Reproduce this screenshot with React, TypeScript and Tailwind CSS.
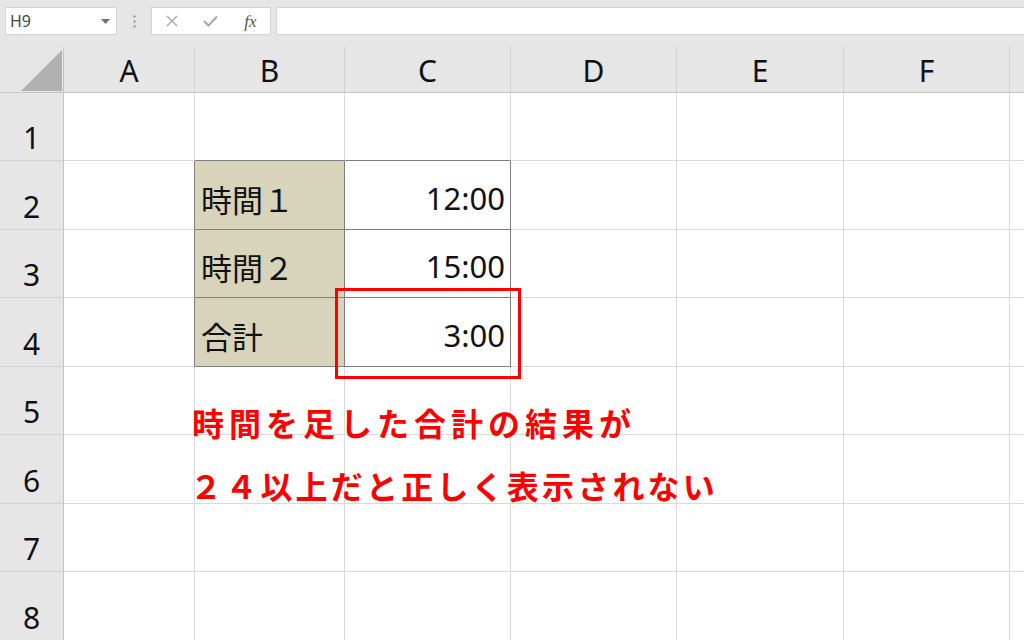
import React from "react";

const COLS = ["A", "B", "C", "D", "E", "F"];
const COLW = ["w-[131px]", "w-[150px]", "w-[166px]", "w-[166px]", "w-[167px]", "w-[166px]"];
const ROWH = ["h-[68px]", "h-[69px]", "h-[68px]", "h-[69px]", "h-[68px]", "h-[69px]", "h-[68px]", "h-[69px]"];

const jp = "font-['Noto_Sans_CJK_JP','Noto_Sans',sans-serif]";
const num = "font-['Noto_Sans','Noto_Sans_CJK_JP',sans-serif]";

function cellClass(r: number, c: number): string {
  // r: 1..8, c: 0..5 (A..F)
  const inTable = r >= 2 && r <= 4 && (c === 1 || c === 2);
  const right =
    inTable || (c === 0 && r >= 2 && r <= 4) ? "border-r-[#7f7f7f]" : "border-r-[#dadada]";
  const bottom =
    inTable || (r === 1 && (c === 1 || c === 2)) ? "border-b-[#7f7f7f]" : "border-b-[#dadada]";
  const bg = inTable && c === 1 ? "bg-[#d8d4bc]" : "bg-white";
  return `shrink-0 border-r border-b ${right} ${bottom} ${bg} flex items-end`;
}

const data: Record<string, { text: string; align: "left" | "right"; jp?: boolean }> = {
  "2-1": { text: "時間１", align: "left", jp: true },
  "3-1": { text: "時間２", align: "left", jp: true },
  "4-1": { text: "合計", align: "left", jp: true },
  "2-2": { text: "12:00", align: "right" },
  "3-2": { text: "15:00", align: "right" },
  "4-2": { text: "3:00", align: "right" },
};

export default function App() {
  return (
    <div className="relative w-[1024px] h-[640px] overflow-hidden bg-[#e6e6e6] select-none">
      {/* Formula bar */}
      <div className="flex items-center h-[47px] pt-[7px] pb-[12px] pl-[5px]">
        <div className="flex items-center justify-between w-[112px] h-[28px] bg-white border border-[#d4d4d4] pl-[4px] pr-[6px]">
          <span className="text-[16px] text-[#444] font-['Noto_Sans',sans-serif] leading-none">H9</span>
          <svg width="9" height="5" viewBox="0 0 9 5">
            <path d="M0 0 L9 0 L4.5 5 Z" fill="#707070" />
          </svg>
        </div>
        <div className="w-[34px] flex justify-center">
          <svg width="3" height="13" viewBox="0 0 3 13">
            <circle cx="1.5" cy="1.5" r="1.2" fill="#9a9a9a" />
            <circle cx="1.5" cy="6.5" r="1.2" fill="#9a9a9a" />
            <circle cx="1.5" cy="11.5" r="1.2" fill="#9a9a9a" />
          </svg>
        </div>
        <div className="flex items-center w-[120px] h-[28px] bg-white border border-[#d4d4d4]">
          <div className="w-[40px] flex justify-center">
            <svg width="12" height="12" viewBox="0 0 12 12">
              <path d="M1 1 L11 11 M11 1 L1 11" stroke="#a8a8a8" strokeWidth="1.4" />
            </svg>
          </div>
          <div className="w-[40px] flex justify-center">
            <svg width="15" height="12" viewBox="0 0 15 12">
              <path d="M1 6 L5.5 10.5 L14 1.5" stroke="#a8a8a8" strokeWidth="2" fill="none" />
            </svg>
          </div>
          <div className="w-[40px] flex justify-center">
            <span className="font-['Liberation_Serif',serif] italic text-[17px] text-[#555] leading-none">fx</span>
          </div>
        </div>
        <div className="ml-[5px] flex-1 h-[28px] bg-white border border-[#d4d4d4] border-r-0" />
      </div>

      {/* Column headers */}
      <div className="flex h-[46px] border-b border-[#c4c4c4]">
        <div className="relative w-[64px] shrink-0 border-r border-[#c4c4c4]">
          <svg className="absolute right-[1px] bottom-[1px]" width="41" height="41" viewBox="0 0 41 41">
            <path d="M41 0 L41 41 L0 41 Z" fill="#b1b1b1" />
          </svg>
        </div>
        {COLS.map((c, i) => (
          <div
            key={c}
            className={`${COLW[i]} shrink-0 border-r border-[#d2d2d2] flex items-center justify-center`}
          >
            <span className={`${num} text-[30px] text-[#111] leading-none pt-[2px]`}>{c}</span>
          </div>
        ))}
        <div className="flex-1" />
      </div>

      {/* Rows */}
      {ROWH.map((h, ri) => {
        const r = ri + 1;
        return (
          <div key={r} className={`flex ${h}`}>
            <div className="w-[64px] shrink-0 border-r border-b border-r-[#c4c4c4] border-b-[#d2d2d2] bg-[#e6e6e6] flex items-end justify-center pb-[7px]">
              <span className={`${num} text-[30px] text-[#111] leading-none`}>{r}</span>
            </div>
            {COLS.map((_, c) => {
              const d = data[`${r}-${c}`];
              return (
                <div key={c} className={`${COLW[c]} ${cellClass(r, c)}`}>
                  {d && (
                    <div
                      className={`w-full pb-[15px] ${
                        d.align === "right" ? "text-right pr-[5px]" : "text-left pl-[6px]"
                      } ${d.jp ? jp : num} text-[31px] text-[#111] leading-none`}
                    >
                      {d.text}
                    </div>
                  )}
                </div>
              );
            })}
            <div className="flex-1 bg-white border-b border-[#dadada]" />
          </div>
        );
      })}

      {/* Red highlight box */}
      <div className="absolute left-[335px] top-[288px] w-[186px] h-[91px] border-[3px] border-[#ff0000]" />

      {/* Annotation text */}
      <div className={`absolute left-[192px] top-[406px] ${jp} font-bold text-[32px] leading-none tracking-[5px] text-[#ff0000] whitespace-nowrap`}>
        時間を足した合計の結果が
      </div>
      <div className={`absolute left-[190px] top-[469px] ${jp} font-bold text-[32px] leading-none tracking-[3.2px] text-[#ff0000] whitespace-nowrap`}>
        ２４以上だと正しく表示されない
      </div>
    </div>
  );
}
